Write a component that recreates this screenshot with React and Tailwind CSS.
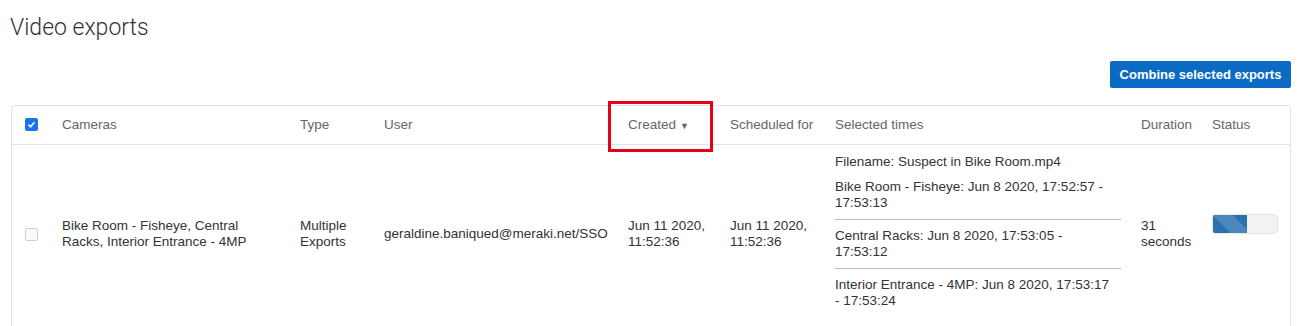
import React from 'react';

const selectedTimes = [
  'Bike Room - Fisheye: Jun 8 2020, 17:52:57 - 17:53:13',
  'Central Racks: Jun 8 2020, 17:53:05 - 17:53:12',
  'Interior Entrance - 4MP: Jun 8 2020, 17:53:17 - 17:53:24',
];

const App = () => {
  return (
    <div className="min-h-screen bg-white px-[11px] pt-[13px] font-['Liberation_Sans',Arial,sans-serif] text-[13.5px] text-[#333]">
      <h1 className="font-['Roboto',sans-serif] text-[23px] font-light leading-[30px] text-[#333] -ml-px">Video exports</h1>

      <div className="mt-[18px] flex justify-end pr-px">
        <button className="h-[27px] w-[181px] rounded-[2px] bg-[#0b6bc4] text-[13px] font-bold text-white">
          Combine selected exports
        </button>
      </div>

      {/* Exports table */}
      <div className="mt-[17px] w-[1280px] rounded-[3px] border border-[#e3e3e3]">
        <table className="w-full table-fixed border-collapse">
          <colgroup>
            <col className="w-[50px]" />
            <col className="w-[238px]" />
            <col className="w-[84px]" />
            <col className="w-[244px]" />
            <col className="w-[102px]" />
            <col className="w-[105px]" />
            <col className="w-[306px]" />
            <col className="w-[71px]" />
            <col />
          </colgroup>
          <thead>
            <tr className="h-[38px] border-b border-[#e3e3e3] text-left text-[#666]">
              <th className="pl-[13px] font-normal">
                <span className="flex h-[13px] w-[13px] items-center justify-center rounded-[2px] bg-[#1a73e8]">
                  <svg viewBox="0 0 12 12" className="h-[9px] w-[9px]">
                    <path d="M2 6.2 L4.8 9 L10 3" fill="none" stroke="white" strokeWidth="2.2" />
                  </svg>
                </span>
              </th>
              <th className="pt-px font-normal">Cameras</th>
              <th className="pt-px font-normal">Type</th>
              <th className="pt-px font-normal">User</th>
              <th className="relative pt-px font-normal">
                Created<span className="ml-[4px] text-[9px]">▼</span>
                <span className="pointer-events-none absolute left-[-20px] top-[-5px] h-[51px] w-[105px] border-[3px] border-[#e5001c]" />
              </th>
              <th className="pt-px font-normal">Scheduled for</th>
              <th className="pt-px font-normal">Selected times</th>
              <th className="pt-px font-normal">Duration</th>
              <th className="pt-px font-normal">Status</th>
            </tr>
          </thead>
          <tbody>
            <tr className="align-middle leading-4">
              <td className="pl-[13px] pb-[4px]">
                <span className="block h-[13px] w-[13px] rounded-[2px] border border-[#cfcfcf] bg-[#fafafa]" />
              </td>
              <td className="pr-[30px] pb-[4px]">Bike Room - Fisheye, Central Racks, Interior Entrance - 4MP</td>
              <td className="pr-3 pb-[4px]">Multiple Exports</td>
              <td className="pr-3 pb-[4px]">geraldine.baniqued@meraki.net/SSO</td>
              <td className="pr-3 pb-[4px]">Jun 11 2020, 11:52:36</td>
              <td className="pr-3 pb-[4px]">Jun 11 2020, 11:52:36</td>
              <td className="pr-[20px] pt-[9px] pb-[19px]">
                <div>Filename: Suspect in Bike Room.mp4</div>
                {selectedTimes.map((t, i) => (
                  <div
                    key={t}
                    className={
                      'pr-[6px] ' +
                      (i === 0 ? 'pt-[9px] ' : 'pt-2 ') +
                      (i < selectedTimes.length - 1 ? 'border-b border-[#bdbdbd] pb-2' : '')
                    }
                  >
                    {t}
                  </div>
                ))}
              </td>
              <td className="pr-3 pb-[4px]">31 seconds</td>
              <td className="pr-[10px]">
                <div className="mb-[24px] h-5 w-[66px] overflow-hidden rounded-[3px] border border-[#e6e6e6] bg-[#f2f2f2]">
                  <div className="h-full w-[34px] bg-[#2c71b1] bg-[linear-gradient(45deg,rgba(255,255,255,.15)_25%,transparent_25%,transparent_50%,rgba(255,255,255,.15)_50%,rgba(255,255,255,.15)_75%,transparent_75%,transparent)] bg-[length:40px_40px]" />
                </div>
              </td>
            </tr>
          </tbody>
        </table>
      </div>
    </div>
  );
};

export default App;
